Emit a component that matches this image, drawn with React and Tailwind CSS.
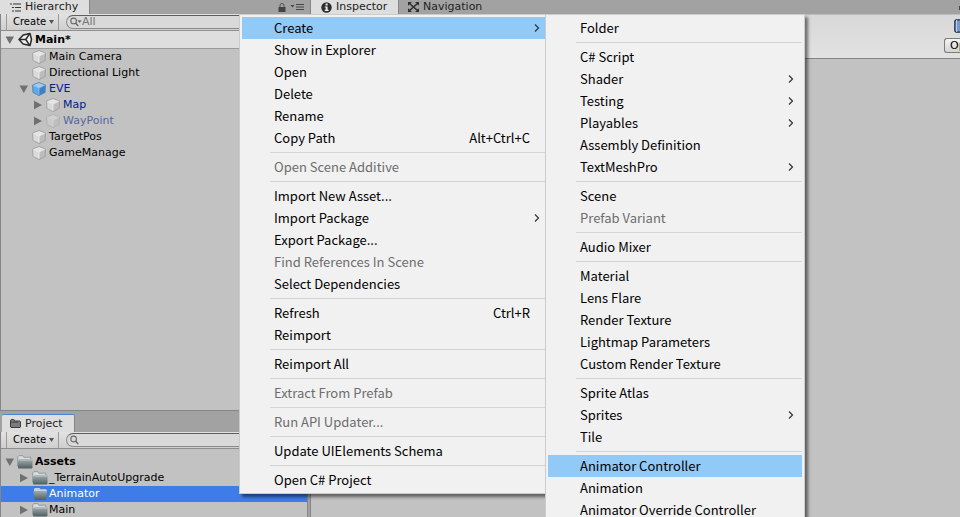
import React from "react";

const hierarchy = [
  { name: "Main Camera", depth: 1, icon: "cube" },
  { name: "Directional Light", depth: 1, icon: "cube" },
  { name: "EVE", depth: 1, icon: "prefab", open: true, tone: "text-[#00218b]" },
  { name: "Map", depth: 2, icon: "cube", open: false, tone: "text-[#00218b]" },
  { name: "WayPoint", depth: 2, icon: "faded", open: false, tone: "text-[#5468a0]" },
  { name: "TargetPos", depth: 1, icon: "cube" },
  { name: "GameManage", depth: 1, icon: "cube" },
];

const assets = [
  { name: "_TerrainAutoUpgrade", depth: 1, icon: "folder", open: false },
  { name: "Animator", depth: 1, icon: "plainFolder", selected: true },
  { name: "Main", depth: 1, icon: "folder", open: false },
];

const contextMenu = [
  { label: "Create", sub: true, active: true },
  { label: "Show in Explorer" },
  { label: "Open" },
  { label: "Delete" },
  { label: "Rename" },
  { label: "Copy Path", keys: "Alt+Ctrl+C" },
  null,
  { label: "Open Scene Additive", disabled: true },
  null,
  { label: "Import New Asset..." },
  { label: "Import Package", sub: true },
  { label: "Export Package..." },
  { label: "Find References In Scene", disabled: true },
  { label: "Select Dependencies" },
  null,
  { label: "Refresh", keys: "Ctrl+R" },
  { label: "Reimport" },
  null,
  { label: "Reimport All" },
  null,
  { label: "Extract From Prefab", disabled: true },
  null,
  { label: "Run API Updater...", disabled: true },
  null,
  { label: "Update UIElements Schema" },
  null,
  { label: "Open C# Project" },
];

const createMenu = [
  { label: "Folder" },
  null,
  { label: "C# Script" },
  { label: "Shader", sub: true },
  { label: "Testing", sub: true },
  { label: "Playables", sub: true },
  { label: "Assembly Definition" },
  { label: "TextMeshPro", sub: true },
  null,
  { label: "Scene" },
  { label: "Prefab Variant", disabled: true },
  null,
  { label: "Audio Mixer" },
  null,
  { label: "Material" },
  { label: "Lens Flare" },
  { label: "Render Texture" },
  { label: "Lightmap Parameters" },
  { label: "Custom Render Texture" },
  null,
  { label: "Sprite Atlas" },
  { label: "Sprites", sub: true },
  { label: "Tile" },
  null,
  { label: "Animator Controller", active: true },
  { label: "Animation" },
  { label: "Animator Override Controller" },
];

function Arrow({ open }) {
  return (
    <svg className="w-[10px] h-[10px] shrink-0" viewBox="0 0 10 10" fill="#707070" aria-hidden="true">
      {open ? <path d="M0.5 1.5h8.5L4.8 9z" /> : <path d="M1 0.8v8.4L9 5z" />}
    </svg>
  );
}

const cubeColors = {
  cube: { top: "#e4e4e4", left: "#d9d9d9", right: "#bdbdbd", line: "#9a9a9a", mid: "#f4f4f4" },
  faded: { top: "#d0d0d0", left: "#cacaca", right: "#bebebe", line: "#adadad", mid: "#d8d8d8" },
  prefab: { top: "#a0cdef", left: "#62a9e6", right: "#3f7fc4", line: "#4a7fb5", mid: "#8cc5f2" },
};

function Cube({ kind }) {
  const c = cubeColors[kind];
  return (
    <svg className="w-[14px] h-[14px] shrink-0" viewBox="0 0 14 14" aria-hidden="true">
      <path d="M7 0.5L13.4 3 7 6 0.6 3z" fill={c.top} />
      <path d="M0.6 3L7 6v7.6L0.9 10.4z" fill={c.left} />
      <path d="M13.4 3L7 6v7.6l6.1-3.2z" fill={c.right} />
      <path d="M0.8 3.1L7 6l6.2-2.9M7 6v7" fill="none" stroke={c.mid} strokeWidth="0.7" />
      <path d="M7 0.5L13.4 3l-0.3 7.4L7 13.6 0.9 10.4 0.6 3z" fill="none" stroke={c.line} strokeWidth="0.8" strokeLinejoin="round" />
    </svg>
  );
}

function Folder({ plain }) {
  return (
    <svg className="w-[16px] h-[14px] shrink-0" viewBox="0 0 16 14" aria-hidden="true">
      <defs>
        <linearGradient id="folderFront" x1="0" y1="0" x2="0" y2="1">
          <stop offset="0" stopColor="#9eabad" />
          <stop offset="1" stopColor="#4f5e62" />
        </linearGradient>
      </defs>
      {plain ? (
        <>
          <path d="M2 5V2L3 1h4.5l1 1.2H14l0.8 1V6z" fill="#c9d2d6" />
          <path d="M1.5 4h13.5l-0.8 8.2-1 0.8H3.3l-1-0.8z" fill="url(#folderFront)" />
        </>
      ) : (
        <>
          <path d="M0.8 11V1.8L1.8 0.6h4l1 1.6h7V5H3.5z" fill="#d5dadb" stroke="#707b7e" strokeWidth="0.6" />
          <path d="M2.2 4.6h13.3v8l-0.8 0.8H1.5L0.8 12V6z" fill="url(#folderFront)" />
          <path d="M2.6 5.1h12.5" stroke="#bec8ca" strokeWidth="0.8" />
        </>
      )}
    </svg>
  );
}

function UnityLogo() {
  return (
    <svg className="w-[15px] h-[15px] shrink-0" viewBox="0 0 15 15" aria-hidden="true">
      <path d="M1 7.5L5.2 3 12 1.5l1.5 6-1.5 6-6.8-1.5z" fill="#f2f2f2" stroke="#2a2a2a" strokeWidth="1.5" strokeLinejoin="round" />
      <path d="M2 7.5h5.8M7.8 7.5l3.7-5.6M7.8 7.5l3.7 5.6" stroke="#2a2a2a" strokeWidth="1.5" />
    </svg>
  );
}

function Search({ drop }) {
  return (
    <svg className="w-[12px] h-[10px] shrink-0" viewBox="0 0 12 10" fill="none" stroke="#6a6a6a" aria-hidden="true">
      <circle cx="3.6" cy="3.9" r="2.8" strokeWidth="1.1" />
      <path d="M5.6 6l2.6 3" strokeWidth="1.5" />
      {drop && <path d="M7.3 3.2h4.4L9.5 6z" fill="#6a6a6a" stroke="none" />}
    </svg>
  );
}

function TreeRow({ item, children }) {
  const indent = item.depth === 2 ? "pl-8" : "pl-[18px]";
  return (
    <li className={`flex items-center h-4 ${indent} ${item.selected ? "bg-[#3e7de7] text-white" : item.tone || "text-black"}`}>
      <span className="w-[13px] flex shrink-0">{item.open !== undefined && <Arrow open={item.open} />}</span>
      {children}
      <span className="whitespace-nowrap">{item.name}</span>
    </li>
  );
}

function Toolbar({ placeholder, label, drop }) {
  return (
    <div className="flex items-center h-[17px] pl-[5px] bg-gradient-to-b from-[#e2e2e2] to-[#cfcfcf] border-b border-[#8f8f8f]">
      <button type="button" className="flex items-center justify-between h-4 w-[53px] pl-[6px] pr-1 text-[10px] leading-4 border-x border-[#9a9a9a] text-black">
        Create
        <svg className="w-[5px] h-[4px]" viewBox="0 0 5 4" aria-hidden="true">
          <path d="M0 0h5L2.5 4z" fill="#555" />
        </svg>
      </button>
      <label className="flex items-center flex-1 h-[14px] ml-[7px] pl-[3px] rounded-l-full border border-[#8a8a8a] border-t-[#5e5e5e] bg-[#d9d9d9]">
        <Search drop={drop} />
        <input aria-label={label} placeholder={placeholder} className="w-full h-3 bg-transparent outline-none placeholder:text-[#777777]" />
      </label>
    </div>
  );
}

function Menu({ items, label, className }) {
  return (
    <div role="menu" aria-label={label} className={`absolute py-[2px] bg-[#f1f1f1] border border-[#cccccc] text-[13px] leading-[22px] text-black font-['Noto_Sans_CJK_SC','Noto_Sans',sans-serif] ${className}`}>
      {items.map((item, i) =>
        item === null ? (
          <div key={i} role="separator" className="h-[7px] ml-[30px] mr-[2px] flex items-center">
            <div className="h-px w-full bg-[#d4d4d4]" />
          </div>
        ) : (
          <div key={i} className="px-[2px]">
            <button
              type="button"
              role="menuitem"
              disabled={item.disabled}
              className={`flex items-center w-full h-[22px] pl-8 pr-2 text-left whitespace-nowrap ${item.active ? "bg-[#91c9f7]" : ""} ${item.disabled ? "text-[#6d6d6d]" : ""}`}
            >
              <span className="flex-1">{item.label}</span>
              {item.keys && <span className="pr-[10px]">{item.keys}</span>}
              {item.sub && (
                <svg className="w-[6px] h-[8px]" viewBox="0 0 6 8" fill="none" stroke="#333" strokeWidth="1.2" aria-hidden="true">
                  <path d="M1 0.5L4.5 4 1 7.5" />
                </svg>
              )}
            </button>
          </div>
        )
      )}
    </div>
  );
}

export default function App() {
  return (
    <div className="relative h-screen overflow-hidden flex bg-[#a2a2a2] text-[11px] leading-4 text-black font-['DejaVu_Sans',sans-serif]">
      <div className="w-[308px] shrink-0 flex flex-col">
        <section aria-label="Hierarchy" className="h-[411px] shrink-0 flex flex-col">
          <div className="flex h-[14px] items-center justify-between">
            <h2 className="flex items-center gap-1 h-[14px] w-[90px] pl-[10px] bg-[#dedede] border-r border-[#858585] leading-3 text-[#222]">
              <svg className="w-[11px] h-[9px] shrink-0" viewBox="0 0 11 9" stroke="#333" aria-hidden="true">
                <path d="M0 1h2M3 1h8M2 4.5h2M5 4.5h6M2 8h2M5 8h6" />
              </svg>
              Hierarchy
            </h2>
            <span className="flex items-center gap-1 h-[14px] pr-1">
              <svg className="w-[8px] h-[9px]" viewBox="0 0 8 9" aria-hidden="true">
                <path d="M2 4V2.5a2 2 0 0 1 4 0V4" fill="none" stroke="#555" />
                <path d="M0.5 4h7v5h-7z" fill="#444" />
              </svg>
              <svg className="w-[14px] h-[8px]" viewBox="0 0 14 8" stroke="#444" aria-hidden="true">
                <path d="M0.5 2h4L2.5 4.5z" fill="#444" stroke="none" />
                <path d="M6 1.5h8M6 4h8M6 6.5h8" />
              </svg>
            </span>
          </div>
          <div className="flex-1 border-x border-b border-[#858585] bg-[#c2c2c2]">
            <Toolbar placeholder="All" label="Search hierarchy" drop />
            <div className="flex items-center h-[18px] pl-1 border-b border-[#9a9a9a] bg-[#dedede] font-bold">
              <Arrow open />
              <span className="w-[3px]" />
              <UnityLogo />
              <span className="pl-[2px]">Main*</span>
            </div>
            <ul>
              {hierarchy.map((item) => (
                <TreeRow key={item.name} item={item}>
                  <Cube kind={item.icon} />
                  <span className="w-[3px]" />
                </TreeRow>
              ))}
            </ul>
          </div>
        </section>
        <section aria-label="Project" className="flex-1 flex flex-col pt-[3px]">
          <h2 className="flex items-center gap-1 h-[18px] w-[73px] ml-[2px] pl-2 bg-[#dedede] border-r border-[#858585] border-t border-t-[#4a86dc] leading-4 text-[#222] rounded-t-[2px]">
            <svg className="w-[11px] h-[9px] shrink-0" viewBox="0 0 11 9" aria-hidden="true">
              <path d="M0.5 8V1.2L1.2 0.5h2.6l1 1.5h5l0.7 0.7V8l-0.5 0.5H1z" fill="#7c7c7c" stroke="#3c3c3c" />
              <path d="M1 3.2h7" stroke="#444" />
            </svg>
            Project
          </h2>
          <div className="flex-1 border-x border-[#858585] bg-[#c2c2c2]">
            <Toolbar placeholder="" label="Search project" />
            <div className="flex items-center h-4 mt-[5px] pl-1 font-bold">
              <Arrow open />
              <span className="w-[2px]" />
              <Folder />
              <span className="pl-[2px]">Assets</span>
            </div>
            <ul>
              {assets.map((item) => (
                <TreeRow key={item.name} item={item}>
                  <Folder plain={item.icon === "plainFolder"} />
                  <span className="w-px" />
                </TreeRow>
              ))}
            </ul>
          </div>
        </section>
      </div>
      <section aria-label="Inspector" className="flex-1 flex flex-col ml-[2px]">
        <div className="flex h-[14px] leading-3 text-[#222]">
          <h2 className="flex items-center gap-1 h-[14px] w-[89px] pl-[10px] bg-[#dedede] border-x border-[#858585]">
            <svg className="w-[11px] h-[11px] shrink-0" viewBox="0 0 11 11" aria-hidden="true">
              <circle cx="5.5" cy="5.5" r="5.2" fill="#2e2e2e" />
              <path d="M4.6 1.6h2v1.8h-2zM3.8 4.4h2.8v3.4h1v1.2H3.7V7.8h1V5.6h-1z" fill="#eee" />
            </svg>
            Inspector
          </h2>
          <h2 className="flex flex-1 items-center gap-1 h-[14px] pl-[9px]">
            <svg className="w-[11px] h-[10px] shrink-0" viewBox="0 0 11 10" fill="#2e2e2e" aria-hidden="true">
              <path d="M1.5 1.5l8 7M9.5 1.5l-8 7" stroke="#2e2e2e" strokeWidth="1.6" />
              <path d="M0 0h4L0 3.8zM11 0H7l4 3.8zM0 10h4L0 6.2zM11 10H7l4-3.8z" />
            </svg>
            Navigation
          </h2>
          <svg className="w-px h-[14px]" viewBox="0 0 1 14" fill="#444" aria-hidden="true">
            <path d="M0 6h1v4H0z" />
          </svg>
        </div>
        <div className="flex-1 border-l border-[#858585] bg-[#c2c2c2]">
          <div className="flex flex-col items-end h-[45px] border-t border-b border-t-[#bdbdbd] border-b-[#858585] bg-gradient-to-b from-[#d8d8d8] to-[#e2e2e2]">
            <svg className="w-[6px] h-[14px] mt-1 shrink-0" viewBox="0 0 6 14" aria-hidden="true">
              <path d="M7 0.8H2L0.8 2v10L2 13.2h5z" fill="#7897c4" stroke="#1e2f52" strokeWidth="1.2" />
              <path d="M2.6 1v12" stroke="#c2d4ee" />
            </svg>
            <button type="button" className="w-4 h-[15px] mt-[5px] pl-[5px] overflow-hidden text-left leading-[13px] whitespace-nowrap rounded-l-[3px] border border-r-0 border-[#7c7c7c] bg-gradient-to-b from-[#f4f4f4] to-[#d4d4d4]">
              Open
            </button>
          </div>
        </div>
      </section>

      <Menu items={contextMenu} label="Assets" className="left-[239px] top-[14px] w-[312px] shadow-[3px_3px_3px_rgba(0,0,0,0.5)]" />
      <Menu items={createMenu} label="Create" className="left-[545px] top-[14px] w-[260px] shadow-[3px_3px_3px_rgba(0,0,0,0.5)]" />
    </div>
  );
}
